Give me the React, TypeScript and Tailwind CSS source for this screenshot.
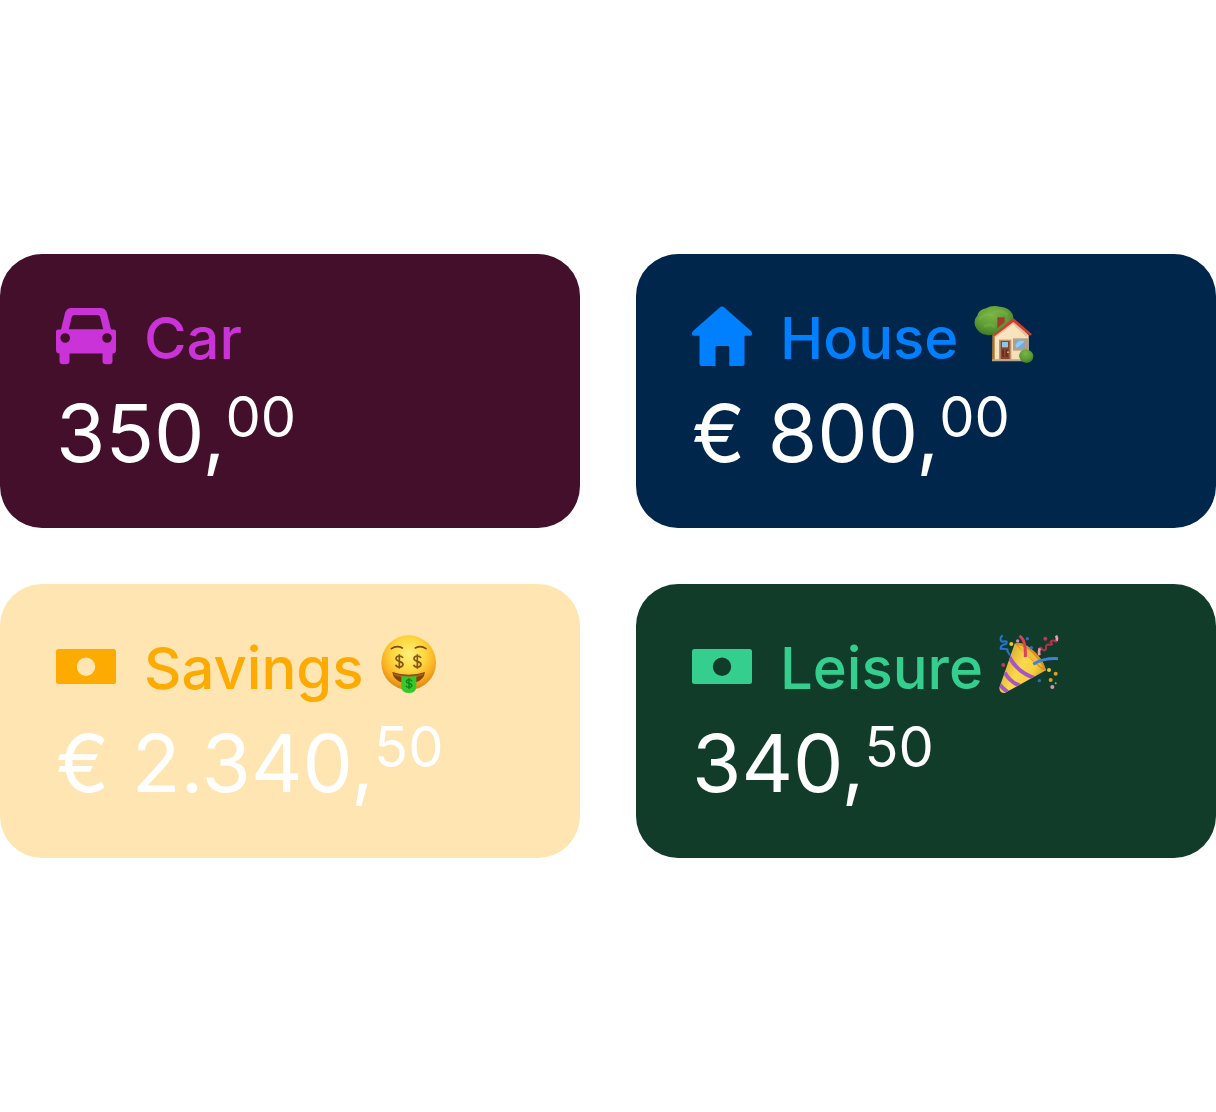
import * as React from 'react';

interface Account {
  name: string;
  icon: React.ReactNode;
  emoji?: React.ReactNode;
  currency?: string;
  whole: string;
  cents: string;
  cardClass: string;
  titleClass: string;
}

function CarIcon() {
  return (
    <svg viewBox="0 0 60 60" className="size-15 shrink-0" fill="currentColor" fillRule="evenodd" aria-hidden="true">
      <path d="M15.500 2H44.500Q49.500 2 51 7L55 23.500H58Q60 23.500 60 25.500V44Q60 47.500 56.500 47.500V55Q56.500 58.300 53 58.300H50Q46.500 58.300 46.500 55V47.500H13.500V55Q13.500 58.300 10 58.300H7Q3.500 58.300 3.500 55V47.500Q0 47.500 0 44V25.500Q0 23.500 2 23.500H5L9 7Q10.500 2 15.500 2ZM18.500 9Q16.300 9 15.800 11L12.800 23.200H47.200L44.200 11Q43.700 9 41.500 9ZM9.200 27.200A4.800 4.800 0 1 0 9.200 36.800A4.800 4.800 0 1 0 9.200 27.200ZM51 27.200A4.800 4.800 0 1 0 51 36.800A4.800 4.800 0 1 0 51 27.200Z" />
    </svg>
  );
}

function HouseIcon() {
  return (
    <svg viewBox="0 0 60 60" className="size-15 shrink-0" fill="currentColor" aria-hidden="true">
      <path d="M28 1.200Q30 -.3 32 1.200L59 25Q60 26 60 27.500V28Q60 29.800 58 29.800H52.500V57.500Q52.500 60 50 60H37.300V41.500Q37.300 40 35.800 40H25Q23.500 40 23.500 41.500V60H10Q7.500 60 7.500 57.500V29.800H2Q0 29.800 0 28V27.500Q0 26 1 25Z" />
    </svg>
  );
}

function CashIcon() {
  return (
    <svg viewBox="0 0 60 60" className="size-15 shrink-0" fill="currentColor" fillRule="evenodd" aria-hidden="true">
      <path d="M2.500 13H57.500Q60 13 60 15.500V45.500Q60 48 57.500 48H2.500Q0 48 0 45.500V15.500Q0 13 2.500 13ZM30 21.500A9.200 9.200 0 1 0 30 39.900A9.200 9.200 0 1 0 30 21.500Z" />
    </svg>
  );
}

function GardenHouseEmoji() {
  return (
    <svg viewBox="30 33 180 180" className="size-15 shrink-0 overflow-visible" role="img" aria-label="House with garden">
      <defs>
        <radialGradient id="leaf" cx="45%" cy="30%" r="70%">
          <stop offset="0" stopColor="#7db544" />
          <stop offset="0.600" stopColor="#5f9c36" />
          <stop offset="1" stopColor="#437a28" />
        </radialGradient>
        <linearGradient id="wall" x1="0" y1="0" x2="1" y2="1">
          <stop offset="0" stopColor="#fbe9c4" />
          <stop offset="1" stopColor="#f3dcb2" />
        </linearGradient>
      </defs>
      <path d="M85 110L98 108V198H84Z" fill="#a8752f" />
      <path d="M33 92Q28 74 40 62Q44 44 66 40Q84 29 108 35Q136 37 146 58Q152 74 138 84L96 114Q82 124 66 119Q44 117 33 92Z" fill="url(#leaf)" />
      <path d="M48 72Q60 54 82 60M62 94Q82 84 90 94M92 50Q112 44 128 58" fill="none" stroke="#8fc25a" strokeWidth="8" strokeLinecap="round" opacity="0.250" />
      <path d="M100 67H122V82L100 100Z" fill="#a33a2d" />
      <path d="M92 120L147 74L194 121V197H92Z" fill="url(#wall)" />
      <path d="M94 117L147 76L192 118L188 126L147 88L94 128Z" fill="#c9a37b" opacity="0.500" />
      <path d="M88 121L148 69L204 118L198 122L148 81L92 124Z" fill="#d33a30" />
      <path d="M105 134H142V194H105Z" fill="#b99572" />
      <path d="M110 138H137V192H110Z" fill="#8a432c" />
      <path d="M114 141H132V157H114Z" fill="#8cc6ea" />
      <path d="M114 164H120V186H114ZM125 164H132V186H125Z" fill="#6d2f20" />
      <circle cx="132" cy="172" r="3" fill="#e0b04b" />
      <path d="M147 130H192V167H147Z" fill="#b99c88" />
      <path d="M153 136H181V160H153Z" fill="#68afe2" />
      <path d="M155 147L166 137H180V142L160 158H155Z" fill="#91caef" />
      <path d="M84 193H196V199H84Z" fill="#b8a48b" />
      <path d="M165 182Q168 164 186 163Q207 167 208 184Q207 202 188 204Q167 200 165 182Z" fill="url(#leaf)" />
    </svg>
  );
}

function MoneyFaceEmoji() {
  return (
    <svg viewBox="30 33 180 180" className="size-15 shrink-0 overflow-visible" role="img" aria-label="Money-mouth face">
      <defs>
        <radialGradient id="face" cx="50%" cy="35%" r="65%">
          <stop offset="0" stopColor="#fff07a" />
          <stop offset="0.450" stopColor="#ffd83f" />
          <stop offset="0.750" stopColor="#f8b123" />
          <stop offset="1" stopColor="#e08317" />
        </radialGradient>
      </defs>
      <circle cx="116" cy="113" r="82" fill="url(#face)" />
      <path d="M64 71Q80 60 97 69M136 69Q153 60 168 71" fill="none" stroke="#7b4912" strokeWidth="5" strokeLinecap="round" />
      <path d="M99 99Q96 93 88 93Q78 94 78 101Q79 107 88 109Q99 112 99 119Q97 126 88 126Q79 126 77 119M88 88V131" fill="none" stroke="#835611" strokeWidth="5" />
      <path d="M153 99Q150 93 142 93Q132 94 132 101Q133 107 142 109Q153 112 153 119Q151 126 142 126Q133 126 131 119M142 88V131" fill="none" stroke="#835611" strokeWidth="5" />
      <path d="M67 141Q116 158 165 141Q162 164 138 172H94Q70 164 67 141Z" fill="#80440d" />
      <path d="M71 145Q116 160 161 145L159 151Q116 166 73 151Z" fill="#a9631a" />
      <path d="M94 153Q116 158 139 153V188Q136 204 117 204Q96 203 94 188Z" fill="#35c92b" />
      <path d="M126 169Q124 164 117 164Q109 165 109 170Q110 174 117 175Q126 177 126 182Q124 187 117 187Q110 187 108 182M117 159V192" fill="none" stroke="#157d1b" strokeWidth="4" />
    </svg>
  );
}

function PartyEmoji() {
  return (
    <svg viewBox="27 33 180 180" className="size-15 shrink-0 overflow-visible" role="img" aria-label="Party popper">
      <defs>
        <linearGradient id="cone" x1="0" y1="0.200" x2="1" y2="0.800">
          <stop offset="0" stopColor="#cf9a27" />
          <stop offset="0.450" stopColor="#fbd84b" />
          <stop offset="0.700" stopColor="#f6cf3e" />
          <stop offset="1" stopColor="#c8871c" />
        </linearGradient>
        <clipPath id="coneClip">
          <path d="M74 56L28 188Q28 204 44 204L168 136Q158 98 120 70Q94 50 74 56Z" />
        </clipPath>
      </defs>
      <path d="M74 56L28 188Q28 204 44 204L168 136Q158 98 120 70Q94 50 74 56Z" fill="url(#cone)" />
      <g clipPath="url(#coneClip)" fill="none" stroke="#a457c4" strokeWidth="12">
        <path d="M58 96Q82 142 136 160" />
        <path d="M44 142Q60 172 94 184" />
        <path d="M28 178Q38 190 54 202" />
      </g>
      <path d="M74 56Q96 48 122 70Q158 98 168 136Q158 138 138 118Q98 78 74 56Z" fill="#d6931f" />
      <path d="M84 60Q112 66 134 92Q154 112 158 128Q132 112 110 90Q92 74 84 60Z" fill="#efbd3c" />
      <path d="M88 33Q108 42 106 96" fill="none" stroke="#dc3f5b" strokeWidth="9" />
      <path d="M130 118Q160 99 204 101" fill="none" stroke="#417fdb" strokeWidth="9" />
      <path d="M38 31Q26 42 36 50Q56 45 48 57Q30 60 32 71Q58 70 52 78Q56 84 60 91" fill="none" stroke="#2874ce" strokeWidth="6" />
      <path d="M148 91Q144 68 152 68Q162 82 168 72Q166 56 178 59Q192 61 182 51Q186 43 198 50Q206 39 198 32" fill="none" stroke="#b9304d" strokeWidth="6" />
      <path d="M148 91Q146 79 149 70M198 32Q203 40 200 47" fill="none" stroke="#ed9bbb" strokeWidth="8" />
      <g fill="#2c6dca">
        <circle cx="112" cy="41" r="5" />
        <circle cx="124" cy="68" r="5" />
        <circle cx="148" cy="167" r="5" />
      </g>
      <g fill="#e5ca38">
        <circle cx="64" cy="57" r="6" />
        <circle cx="177" cy="135" r="6" />
      </g>
      <g fill="#dda02c">
        <circle cx="197" cy="146" r="6" />
        <circle cx="182" cy="165" r="6" />
        <circle cx="197" cy="175" r="3" />
      </g>
      <g fill="#b93d55">
        <circle cx="40" cy="120" r="6" />
        <circle cx="166" cy="41" r="6" />
      </g>
      <circle cx="83" cy="48" r="5" fill="#d889bb" />
      <circle cx="187" cy="186" r="6" fill="#dc8fc1" />
    </svg>
  );
}

const accounts: Account[] = [
  {
    name: 'Car',
    icon: <CarIcon />,
    whole: '350',
    cents: '00',
    cardClass: 'bg-[#430f2b]',
    titleClass: 'text-[#c933d7]',
  },
  {
    name: 'House',
    icon: <HouseIcon />,
    emoji: <GardenHouseEmoji />,
    currency: '€',
    whole: '800',
    cents: '00',
    cardClass: 'bg-[#00264b]',
    titleClass: 'text-[#0080ff]',
  },
  {
    name: 'Savings',
    icon: <CashIcon />,
    emoji: <MoneyFaceEmoji />,
    currency: '€',
    whole: '2.340',
    cents: '50',
    cardClass: 'bg-[#fee5b2]',
    titleClass: 'text-[#fdab00]',
  },
  {
    name: 'Leisure',
    icon: <CashIcon />,
    emoji: <PartyEmoji />,
    whole: '340',
    cents: '50',
    cardClass: 'bg-[#113c2a]',
    titleClass: 'text-[#34cf8f]',
  },
];

function AccountCard({ account }: { account: Account }) {
  return (
    <article className={`min-w-0 rounded-[42px] px-14 pt-13 pb-11 ${account.cardClass}`}>
      <div className={`flex items-start ${account.titleClass}`}>
        {account.icon}
        <h2 className="ml-7 mr-4 text-[58px] leading-16 font-medium">{account.name}</h2>
        {account.emoji}
      </div>
      <p className="mt-3 flex items-start text-[80px] leading-[102px] whitespace-pre text-white">
        {account.currency && `${account.currency} `}
        {account.whole},
        <span className="text-[56px] leading-[70px]">{account.cents}</span>
      </p>
    </article>
  );
}

export default function App() {
  return (
    <main className="flex min-h-screen items-center bg-white font-[Inter,sans-serif]">
      <div className="grid w-full grid-cols-2 gap-14">
        {accounts.map((account) => (
          <AccountCard key={account.name} account={account} />
        ))}
      </div>
    </main>
  );
}
